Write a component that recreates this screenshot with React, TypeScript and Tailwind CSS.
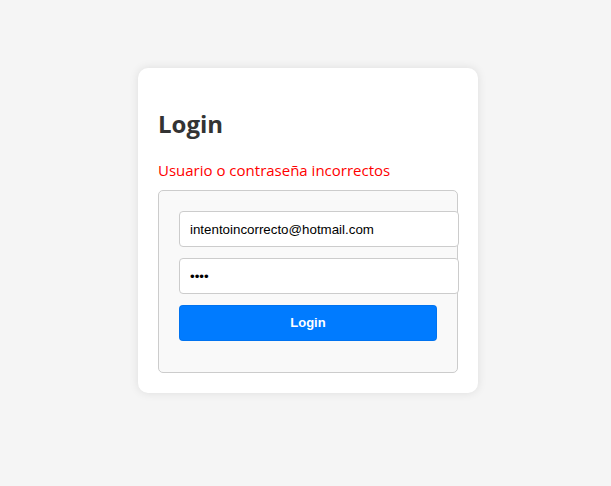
import React from 'react';

const App = () => {
  return (
    <div className="min-h-[486px] bg-[#f5f5f5] flex justify-center items-start pt-[68px] pl-[5px]">
      <div className="w-[340px] bg-white rounded-[10px] shadow-[0_0_10px_rgba(0,0,0,0.1)] p-5 font-['Open_Sans',sans-serif]">
        <h2 className="mt-5 text-[24px] leading-[32px] font-bold text-[#333]">Login</h2>
        <p className="mt-5 text-[15px] leading-[21px] text-[#ff0000]">Usuario o contraseña incorrectos</p>
        <form
          className="mt-[9px] bg-[#f9f9f9] border border-[#ccc] rounded-[5px] p-5"
          onSubmit={(e) => e.preventDefault()}
        >
          <input
            type="email"
            defaultValue="intentoincorrecto@hotmail.com"
            className="block w-[280px] h-[36px] mb-[11px] px-[10px] bg-white border border-[#ccc] rounded-[4px] text-[13.33px] text-black font-['Liberation_Sans',Arial,sans-serif] outline-none"
          />
          <input
            type="password"
            defaultValue="1234"
            className="block w-[280px] h-[36px] mb-[11px] px-[10px] bg-white border border-[#ccc] rounded-[4px] text-[13.33px] text-black font-['Liberation_Sans',Arial,sans-serif] outline-none"
          />
          <button
            type="submit"
            className="block w-full h-[36px] mb-[11px] bg-[#007bff] text-white font-bold rounded-[4px] border border-[#0069d9]/40 text-[13px] font-['Liberation_Sans',Arial,sans-serif]"
          >
            Login
          </button>
        </form>
      </div>
    </div>
  );
};

export default App;
